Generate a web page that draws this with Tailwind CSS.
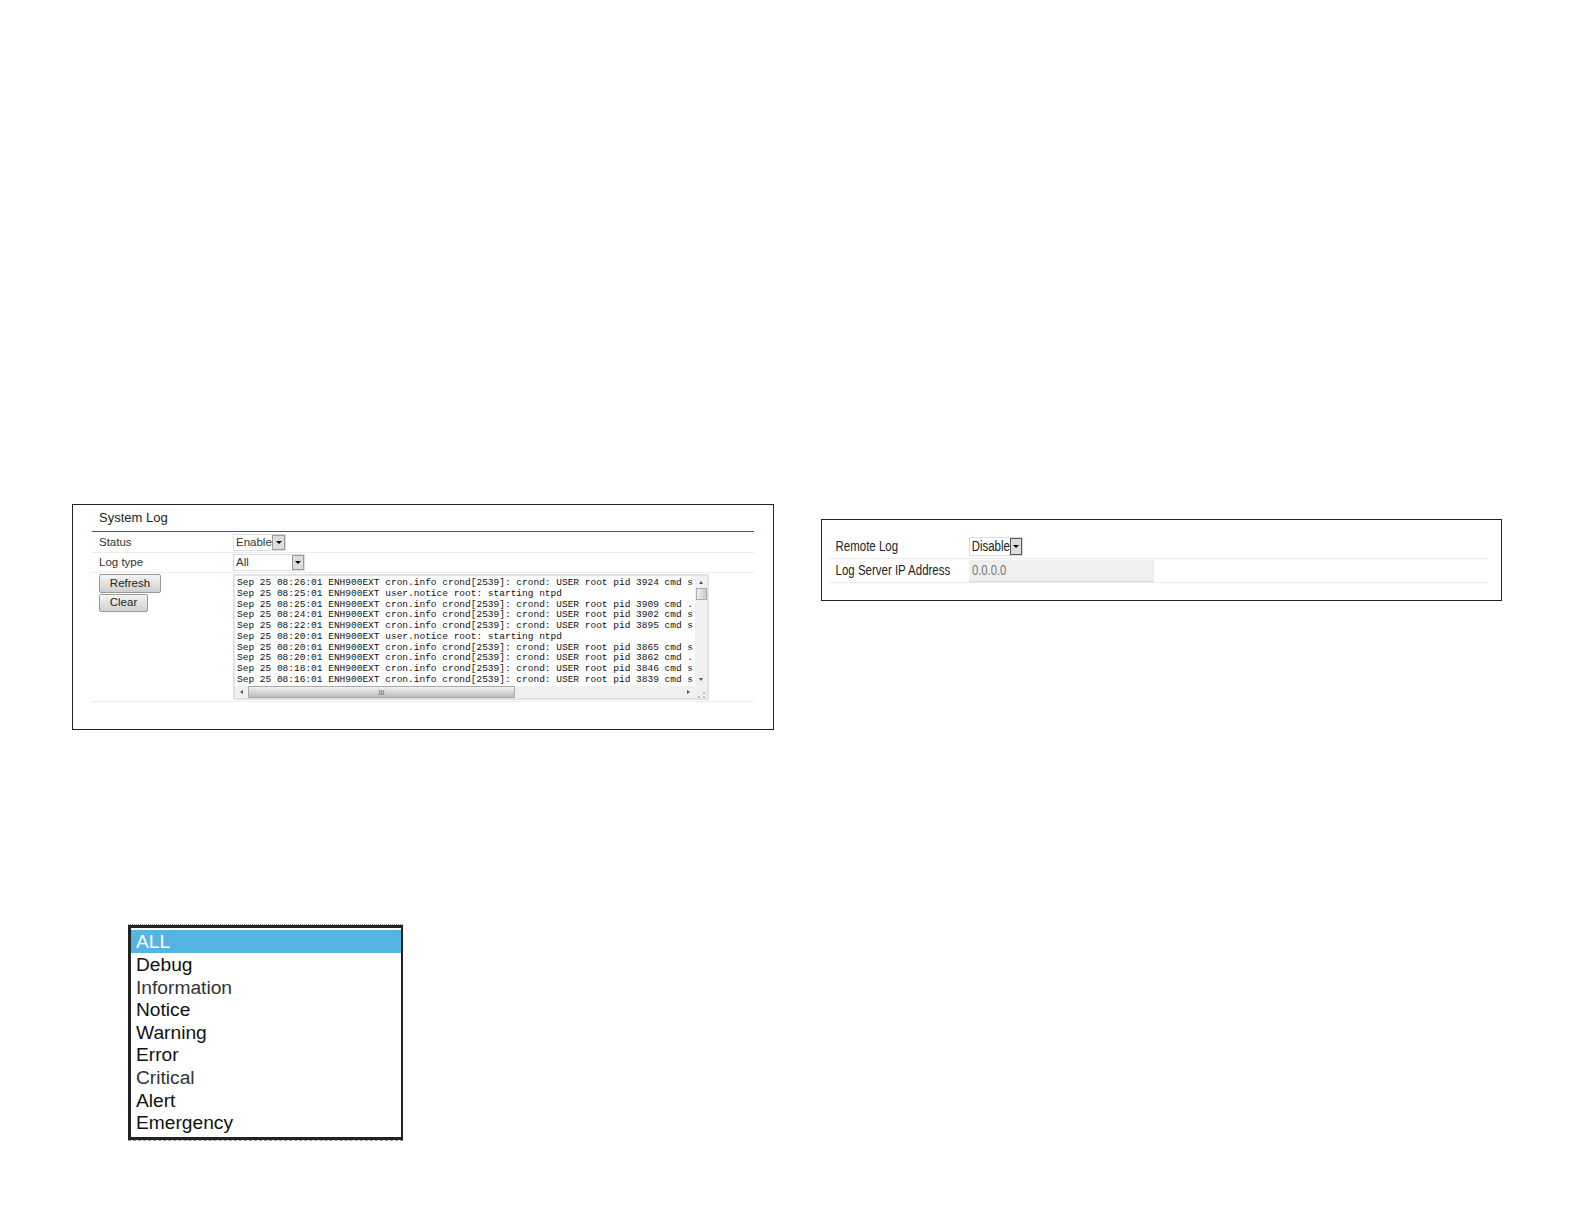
<!DOCTYPE html>
<html lang="en">
<head>
  <meta charset="UTF-8">
  <title>System Log</title>
  <script src="https://cdn.jsdelivr.net/npm/@tailwindcss/browser@4"></script>
</head>
<body class="bg-white font-['Liberation_Sans',Arial,sans-serif] text-[#333] w-[1584px] h-[1224px] overflow-hidden">
  <div class="flex items-start pt-[504px] pl-[72px]">

    <!-- System Log panel -->
    <div class="w-[702px] h-[226px] border border-[#222] pl-[19px] pr-[19px] shrink-0">
      <div class="h-[27px] border-b border-[#2b5c88] pl-[7px] pt-[5px] text-[13px] leading-[16px] text-[#222]">System Log</div>
      <div class="flex items-center h-[21px] border-b border-[#ececec] text-[11.5px]">
        <div class="w-[141px] pl-[7px] pt-[1px]">Status</div>
        <div class="flex w-[53px] h-[17px] border border-[#ddd] items-center">
          <span class="flex-1 pl-[2px] pt-[1px] text-[11.5px]">Enable</span>
          <span class="w-[13px] h-[15px] bg-[#ddd] border border-[#999] flex items-center justify-center"><span class="border-x-[3px] border-t-[3px] border-x-transparent border-t-black"></span></span>
        </div>
      </div>
      <div class="flex items-center h-[20px] border-b border-[#ececec] text-[11.5px]">
        <div class="w-[141px] pl-[7px]">Log type</div>
        <div class="flex w-[72px] h-[17px] border border-[#ddd] items-center">
          <span class="flex-1 pl-[2px]">All</span>
          <span class="w-[12px] h-[15px] bg-[#ddd] border border-[#999] flex items-center justify-center"><span class="border-x-[3px] border-t-[3px] border-x-transparent border-t-black"></span></span>
        </div>
      </div>
      <div class="flex h-[129px] border-b border-[#ececec]">
        <div class="w-[141px] pl-[7px] pt-[1px] flex flex-col items-start gap-[1px] text-[11.5px] text-[#222]">
          <button class="w-[62px] h-[19px] rounded-[2px] border border-[#999] bg-gradient-to-b from-[#f4f4f4] to-[#cfcfcf] leading-none">Refresh</button>
          <button class="w-[49px] h-[18px] rounded-[2px] border border-[#999] bg-gradient-to-b from-[#f4f4f4] to-[#cfcfcf] leading-none">Clear</button>
        </div>
        <!-- log textarea with scrollbars -->
        <div class="w-[476px] h-[126px] mt-[1px] border-2 border-[#e2e2e2] flex flex-col">
          <div class="flex h-[110px]">
            <pre class="flex-1 overflow-hidden pl-[2px] pt-[2px] font-['Liberation_Mono',monospace] text-[9.5px] leading-[10.75px] text-[#111]">Sep 25 08:26:01 ENH900EXT cron.info crond[2539]: crond: USER root pid 3924 cmd s
Sep 25 08:25:01 ENH900EXT user.notice root: starting ntpd
Sep 25 08:25:01 ENH900EXT cron.info crond[2539]: crond: USER root pid 3909 cmd .
Sep 25 08:24:01 ENH900EXT cron.info crond[2539]: crond: USER root pid 3902 cmd s
Sep 25 08:22:01 ENH900EXT cron.info crond[2539]: crond: USER root pid 3895 cmd s
Sep 25 08:20:01 ENH900EXT user.notice root: starting ntpd
Sep 25 08:20:01 ENH900EXT cron.info crond[2539]: crond: USER root pid 3865 cmd s
Sep 25 08:20:01 ENH900EXT cron.info crond[2539]: crond: USER root pid 3862 cmd .
Sep 25 08:18:01 ENH900EXT cron.info crond[2539]: crond: USER root pid 3846 cmd s
Sep 25 08:16:01 ENH900EXT cron.info crond[2539]: crond: USER root pid 3839 cmd s</pre>
            <div class="w-[12px] bg-[#f0f0f0] flex flex-col items-center">
              <span class="mt-[5px] border-x-[2.5px] border-b-[3px] border-x-transparent border-b-[#555]"></span>
              <span class="mt-[4px] w-[11px] h-[12px] border border-[#aaa] bg-gradient-to-r from-[#eee] to-[#ccc]"></span>
              <span class="mt-auto mb-[5px] border-x-[2.5px] border-t-[3px] border-x-transparent border-t-[#555]"></span>
            </div>
          </div>
          <div class="flex items-center h-[12px] bg-[#f0f0f0]">
            <span class="ml-[5px] border-y-[2.5px] border-r-[3px] border-y-transparent border-r-[#555]"></span>
            <span class="ml-[5px] w-[267px] h-[12px] border border-[#aaa] bg-gradient-to-b from-[#f2f2f2] to-[#bcbcbc] flex items-center justify-center text-[7px] leading-none text-[#555]">III</span>
            <span class="ml-[172px] border-y-[2.5px] border-l-[3px] border-y-transparent border-l-[#555]"></span>
            <span class="ml-auto mr-[2px] mt-[5px] w-[7px] h-[6px] border-b-2 border-r-2 border-dotted border-[#bbb]"></span>
          </div>
        </div>
      </div>
    </div>

    <!-- Remote log panel -->
    <div class="ml-[47px] mt-[15px] w-[681px] h-[82px] border border-[#222] pl-[7px] pr-[13px] pt-[16px] shrink-0 text-[14px] text-[#222]">
      <div class="flex items-center h-[23px] border-b border-[#ececec]">
        <div class="w-[140px] pl-[8px] pb-[1px] origin-left scale-x-[0.82] whitespace-nowrap">Remote Log</div>
        <div class="flex w-[54px] h-[19px] border border-[#ddd] items-center -mt-[2px]">
          <span class="flex-1 min-w-0 pl-[2px] origin-left scale-x-[0.82] whitespace-nowrap">Disable</span>
          <span class="shrink-0 w-[12px] h-[17px] bg-[#ddd] border border-[#555] flex items-center justify-center"><span class="border-x-[3px] border-t-[3px] border-x-transparent border-t-black"></span></span>
        </div>
      </div>
      <div class="flex items-center h-[24px] border-b border-[#ececec]">
        <div class="w-[140px] pl-[8px] origin-left scale-x-[0.82] whitespace-nowrap">Log Server IP Address</div>
        <div class="w-[185px] h-[22px] bg-[#efefef] border-b border-[#ddd] pl-[3px] text-[#777] leading-[21px]"><span class="inline-block origin-left scale-x-[0.8]">0.0.0.0</span></div>
      </div>
    </div>
  </div>

  <!-- Log type dropdown -->
  <div class="ml-[128px] mt-[194px] w-[275px] border-t border-dotted border-[#888]">
    <div class="h-[215px] border-[3px] border-r-[2px] border-[#222] pt-[2px] text-[19.2px] leading-[22.6px] text-[#111]">
      <div class="h-[23px] bg-[#56b4e3] pl-[5px] pt-[1px] text-white">ALL</div>
      <div class="pl-[5px] pt-[1px] -mb-[1px]">Debug</div>
      <div class="pl-[5px] pt-[1px] -mb-[1px] text-[#333]">Information</div>
      <div class="pl-[5px] pt-[1px] -mb-[1px]">Notice</div>
      <div class="pl-[5px] pt-[1px] -mb-[1px]">Warning</div>
      <div class="pl-[5px] pt-[1px] -mb-[1px]">Error</div>
      <div class="pl-[5px] pt-[1px] -mb-[1px] text-[#333]">Critical</div>
      <div class="pl-[5px] pt-[1px] -mb-[1px]">Alert</div>
      <div class="pl-[5px] pt-[1px] -mb-[1px]">Emergency</div>
    </div>
    <div class="h-[1px] border-t border-dashed border-[#999]"></div>
  </div>
</body>
</html>
